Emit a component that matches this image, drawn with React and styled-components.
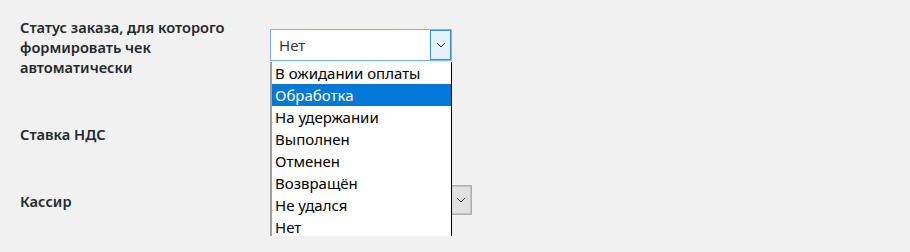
import styled, { createGlobalStyle } from "styled-components";

const GlobalStyle = createGlobalStyle`
  html, body {
    margin: 0;
    background: #f1f1f1;
  }
  body {
    font-family: "Noto Sans", "Open Sans", sans-serif;
    color: #23282d;
  }
`;

const Form = styled.div`
  padding-left: 20px;
  width: 890px;
`;

const Row = styled.div`
  display: grid;
  grid-template-columns: 250px 1fr;
  height: ${(p) => p.$h}px;
`;

const Label = styled.div`
  padding-top: ${(p) => p.$top}px;
  width: 228px;
  font-size: 14.6px;
  font-weight: 600;
  line-height: 20px;
`;

const Field = styled.div`
  padding-top: ${(p) => p.$top}px;
`;

const SelectWrap = styled.div`
  position: relative;
  width: ${(p) => p.$w}px;
  z-index: ${(p) => (p.$open ? 2 : 1)};
`;

const SelectBox = styled.div`
  display: flex;
  box-sizing: border-box;
  height: ${(p) => p.$h}px;
  border: 1px solid ${(p) => (p.$focused ? "#7eb4ea" : "#adadad")};
  background: #fff;
`;

const Value = styled.div`
  flex: 1;
  display: flex;
  align-items: center;
  padding-left: 8px;
  font-size: 15px;
  color: #32373c;
`;

const ArrowBox = styled.div`
  width: 21px;
  box-sizing: border-box;
  display: flex;
  align-items: center;
  justify-content: center;
  background: ${(p) => (p.$focused ? "#e5f1fb" : "#e1e1e1")};
  border: 1px solid ${(p) => (p.$focused ? "#3c8fdd" : "#c4c4c4")};
`;

const List = styled.ul`
  position: absolute;
  top: 100%;
  left: 0;
  margin: 1px 0 0;
  padding: 0;
  list-style: none;
  width: 182px;
  box-sizing: border-box;
  background: #fff;
  border-left: 2px solid #a0a0a0;
  border-right: 1px solid #000;
  border-bottom: 1px solid #000;
`;

const Item = styled.li`
  height: 22px;
  line-height: 22px;
  padding-left: 3px;
  font-size: 15px;
  color: ${(p) => (p.$active ? "#fff" : "#000")};
  background: ${(p) => (p.$active ? "#0078d7" : "transparent")};
  white-space: nowrap;
`;

const Chevron = () => (
  <svg width="10" height="6" viewBox="0 0 10 6">
    <path d="M1 1l4 4 4-4" fill="none" stroke="#333" strokeWidth="1" />
  </svg>
);

const statuses = [
  "В ожидании оплаты",
  "Обработка",
  "На удержании",
  "Выполнен",
  "Отменен",
  "Возвращён",
  "Не удался",
  "Нет",
];

// selects under the open list show no value: it is covered by the list
const Select = ({ value, width, height, focused, open, options, active }) => (
  <SelectWrap $w={width} $open={open}>
    <SelectBox $h={height} $focused={focused}>
      <Value>{value}</Value>
      <ArrowBox $focused={focused}>
        <Chevron />
      </ArrowBox>
    </SelectBox>
    {open && (
      <List>
        {options.map((o) => (
          <Item key={o} $active={o === active}>
            {o}
          </Item>
        ))}
      </List>
    )}
  </SelectWrap>
);

export default function App() {
  return (
    <>
      <GlobalStyle />
      <Form>
        <Row $h={104}>
          <Label $top={17}>Статус заказа, для которого формировать чек автоматически</Label>
          <Field $top={29}>
            <Select
              value="Нет"
              width={182}
              height={32}
              focused
              open
              options={statuses}
              active="Обработка"
            />
          </Field>
        </Row>
        <Row $h={66}>
          <Label $top={20}>Ставка НДС</Label>
          <Field $top={15}>
            <Select width={170} height={30} />
          </Field>
        </Row>
        <Row $h={66}>
          <Label $top={21}>Кассир</Label>
          <Field $top={15}>
            <Select width={202} height={30} />
          </Field>
        </Row>
      </Form>
    </>
  );
}
